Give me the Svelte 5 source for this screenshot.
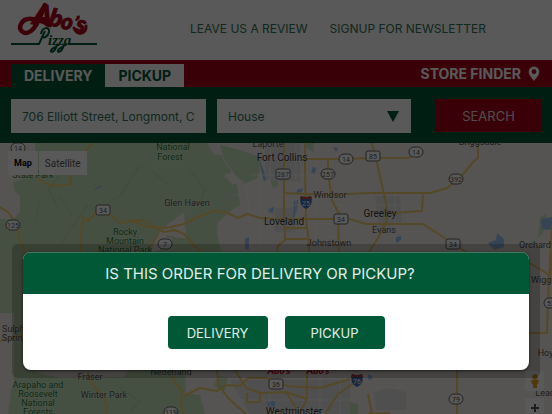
<script>
  let address = $state('706 Elliott Street, Longmont, CO 80504, USA');
  let place = $state('House');

  const roads = [
    'M0 207 L8 212 17 225 20 240 29 258',
    'M93 143 L84 152 M38 178 L46 184 58 186 71 184 71 174',
    'M80 252 L81 235 83 217 88 221 99 210 112 216 120 223 132 221 147 227 166 228 184 224 198 217 213 211 225 212 238 218 247 214 260 218 284 219 350 219 366 224 400 224 423 224 437 233 452 243 466 252',
    'M130 221 L143 220 156 228 164 232 176 230 M158 234 L152 245 146 252 M172 229 L184 234 200 252',
    'M284 143 L284 218 285 240 278 246 277 252 M285 228 L307 228 M285 239 L308 239',
    'M305 143 L305 170 306 219 309 242 309 252',
    'M305 159 L345 159 368 158 408 158 423 150',
    'M284 193 L330 195 368 193 430 193 447 188 460 178 474 161 478 158 478 143',
    'M328 159 L328 172 332 200 340 216 M338 219 L339 252',
    'M372 143 L379 172 386 203 387 220 378 238 369 252 M392 213 L422 211 423 195',
    'M528 262 L548 274 550 280 552 252 M552 225 L548 300 547 333 528 333',
    'M0 341 L24 335 M88 372 L91 382 100 393 107 406 106 414 M172 370 L173 380 182 391 181 404 184 414',
    'M184 396 L200 388 217 391 226 385 240 386 248 378 266 378 288 386 320 388 350 379',
    'M217 370 L219 386 229 399 246 414 M235 370 L246 388 260 393 286 392 307 399 307 370 M307 399 L299 414 M286 392 L300 414 M325 414 L338 394 361 378',
    'M247 393 L247 402 260 402 260 393 M457 370 L457 414 M368 394 L372 414 M368 414 L390 413'
  ];

  const minor = [
    'M217 143 L224 160 236 177 246 183 250 219',
    'M232 195 L284 195 M260 180 L260 252 M270 143 L270 252 M296 143 L296 252 M316 143 L316 252 M250 175 L330 175 M250 205 L345 205 M320 237 L368 237',
    'M350 143 L350 252 M368 180 L430 180 M368 205 L420 205 M395 170 L395 245 M408 180 L408 240 M370 232 L430 232',
    'M190 378 L350 378 M200 400 L350 400 M270 370 L270 414 M320 370 L320 414 M340 370 L340 414 M410 370 L410 414 M480 370 L480 414 M370 388 L528 388'
  ];

  const labels = [
    { x: 173, y: 150, t: 'National', c: 'park' },
    { x: 170, y: 160, t: 'Forest', c: 'park' },
    { x: 33, y: 178, t: 'State Park', c: 'park' },
    { x: 125, y: 235, t: 'Rocky', c: 'park' },
    { x: 125, y: 244, t: 'Mountain', c: 'park' },
    { x: 125, y: 253, t: 'National Park', c: 'park' },
    { x: 38, y: 388, t: 'Arapaho and', c: 'park' },
    { x: 38, y: 397, t: 'Roosevelt', c: 'park' },
    { x: 38, y: 406, t: 'National', c: 'park' },
    { x: 38, y: 415, t: 'Forests', c: 'park' },
    { x: 187, y: 206, t: 'Glen Haven', c: 'town' },
    { x: 268, y: 147, t: 'Laporte', c: 'town' },
    { x: 282, y: 161, t: 'Fort Collins', c: 'city' },
    { x: 330, y: 198, t: 'Windsor', c: 'town' },
    { x: 284, y: 225, t: 'Loveland', c: 'city' },
    { x: 329, y: 246, t: 'Johnstown', c: 'town' },
    { x: 380, y: 217, t: 'Greeley', c: 'city' },
    { x: 384, y: 233, t: 'Evans', c: 'town' },
    { x: 480, y: 145, t: 'Briggsdale', c: 'town' },
    { x: 535, y: 248, t: 'Orchard', c: 'town' },
    { x: 547, y: 283, t: 'Wiggins', c: 'town' },
    { x: 547, y: 356, t: 'Hoyt', c: 'town' },
    { x: 549, y: 396, t: 'Leader', c: 'town' },
    { x: 9, y: 332, t: 'Hot Sulphur', c: 'town' },
    { x: 17, y: 341, t: 'Springs', c: 'town' },
    { x: 90, y: 380, t: 'Fraser', c: 'town' },
    { x: 104, y: 398, t: 'Winter Park', c: 'town' },
    { x: 171, y: 375, t: 'Nederland', c: 'town' },
    { x: 294, y: 415, t: 'Westminster', c: 'city' }
  ];

  const shields = [
    { x: 18, y: 148, n: '14' },
    { x: 13, y: 225, n: '125' },
    { x: 103, y: 210, n: '34', us: true },
    { x: 165, y: 244, n: '7' },
    { x: 283, y: 174, n: '287', us: true },
    { x: 328, y: 174, n: '257' },
    { x: 346, y: 159, n: '14' },
    { x: 373, y: 156, n: '85', us: true },
    { x: 416, y: 152, n: '14' },
    { x: 456, y: 179, n: '392' },
    { x: 341, y: 219, n: '34', us: true },
    { x: 453, y: 244, n: '34', us: true },
    { x: 276, y: 384, n: '36', us: true },
    { x: 171, y: 412, n: '119' },
    { x: 456, y: 399, n: '79' },
    { x: 551, y: 303, n: '52' }
  ];

  const interstates = [
    { x: 306, y: 202, n: '25' },
    { x: 357, y: 380, n: '76' }
  ];
</script>

<div class="page">
  <header>
    <a class="logo" href="#home" aria-label="Abo's Pizza">
      <svg width="88" height="56" viewBox="10 0 88 56">
        <path d="M45 5 C41 14 38 26 31 31 C24 36 18 30 21 24 C25 16 36 18 50 25" fill="none" stroke="#a80018" stroke-width="4.5" stroke-linecap="round" />
        <g class="word">
          <text x="32" y="24" font-size="29" transform="rotate(8 32 24)">A</text>
          <text x="48" y="25" font-size="24" transform="rotate(12 48 25)">b</text>
          <text x="60" y="28" font-size="22" transform="rotate(12 60 28)">o</text>
          <text x="73" y="28" font-size="17" transform="rotate(12 73 28)">’</text>
          <text x="75" y="31" font-size="23" transform="rotate(12 75 31)">s</text>
        </g>
        <path d="M74 28 C77 36 87 34 86 26" fill="none" stroke="#a80018" stroke-width="3" stroke-linecap="round" />
        <path d="M11 44 H39 L45 31 M68 44 H97" fill="none" stroke="#005836" stroke-width="2" />
        <path d="M41 34 C42 27 50 26 49 32 C48 37 43 39 42 36" fill="none" stroke="#005836" stroke-width="2" />
        <text class="pizza" x="48" y="45">izza</text>
        <path d="M57 44 C55 54 48 53 52 49 L60 44 M64 44 C62 54 55 53 59 49 L67 44" fill="none" stroke="#005836" stroke-width="2" />
      </svg>
    </a>
    <nav>
      <a href="#review">LEAVE US A REVIEW</a>
      <a href="#newsletter">SIGNUP FOR NEWSLETTER</a>
    </nav>
  </header>

  <div class="bar">
    <div class="tabs">
      <button class="tab active">DELIVERY</button>
      <button class="tab">PICKUP</button>
    </div>
    <a class="finder" href="#stores">
      STORE FINDER
      <svg width="12" height="16" viewBox="0 0 12 16">
        <path fill="#fff" fill-rule="evenodd" d="M6 0.5 A5.3 5.3 0 0 0 .7 5.8 C.7 9.5 4 12 6 15 C8 12 11.3 9.5 11.3 5.8 A5.3 5.3 0 0 0 6 .5 Z M6 3.3 A2.4 2.4 0 1 1 6 8.1 A2.4 2.4 0 1 1 6 3.3 Z" />
      </svg>
    </a>
  </div>

  <form class="search" onsubmit={(e) => e.preventDefault()}>
    <input type="text" aria-label="Address" bind:value={address} />
    <div class="select">
      <select aria-label="Place type" bind:value={place}>
        <option>House</option>
        <option>Apartment</option>
        <option>Business</option>
      </select>
      <svg width="12" height="11" viewBox="0 0 12 11"><path d="M0 0 H12 L6 11 Z" fill="#005836" /></svg>
    </div>
    <button>SEARCH</button>
  </form>

  <div class="map">
    <svg class="tiles" viewBox="0 143 552 271" preserveAspectRatio="xMidYMin slice">
      <rect x="0" y="143" width="552" height="271" fill="#f3efea" />
      <path fill="#c8e6bd" d="M35 143 H207 L214 155 232 154 231 172 224 177 237 184 240 205 232 210 218 222 217 233 221 252 225 414 H8 L12 385 14 313 0 313 V219 L13 219 20 212 20 196 14 190 13 182 20 180 35 172 Z" />
      <path fill="#f3efea" d="M168 224 L184 212 186 238 178 238 165 240 160 250 152 252 153 240 Z M224 174 L237 174 240 184 232 184 Z M0 313 H14 V388 L0 392 Z M20 368 H130 L124 377 60 378 Z M185 370 H225 V414 H205 L200 395 186 393 Z" />
      <path fill="#c8e6bd" d="M220 145 L240 150 262 158 258 178 244 184 226 166 Z M270 180 L277 176 278 186 273 188 Z M306 143 H314 V152 L306 148 Z M247 390 H262 V402 H247 Z M330 405 L342 400 358 404 358 414 H326 Z M218 375 L228 378 224 392 214 386 Z M540 218 L546 214 545 230 538 238 Z" />
      <path fill="#e4e2e6" d="M265 143 H300 V182 L265 180 Z M275 208 H296 V232 H275 Z M375 196 L400 196 402 222 380 228 Z M374 392 L390 387 407 393 406 410 376 410 Z M230 380 L350 380 V414 H250 Z" />
      <g fill="none" stroke="#b8d6a9" stroke-width="2" opacity=".6">
        <path d="M140 165 L120 196 108 204 M62 172 L48 190 60 210 M88 205 L70 230 60 246 M190 170 L205 190 200 204 M184 240 L166 236 M120 388 L140 402 130 412 M60 196 L72 216 M150 170 L168 184 M30 250 L20 270 M40 200 L34 226" />
      </g>
      <g fill="#9bc7f2">
        <path d="M94 189 L102 185 102 187 95 190 Z M260 160 L264 171 266 180 264 182 261 170 Z M294 201 L298 200 297 212 293 218 Z M245 239 L249 237 249 249 245 250 Z M313 167 L317 168 315 174 311 172 Z M297 190 L303 188 302 192 296 193 Z M333 147 L338 148 336 152 Z M396 237 L401 236 401 240 396 243 Z M488 243 L496 240 497 233 504 239 504 247 494 250 Z M541 219 L552 217 552 230 542 229 Z M267 402 L275 401 275 406 268 407 Z M368 374 L373 376 371 380 368 379 Z M268 209 L274 207 273 213 269 213 Z" />
      </g>
      {#each minor as d}<path {d} fill="none" stroke="#fff" stroke-width="1" opacity=".6" />{/each}
      {#each roads as d}<path {d} fill="none" stroke="#f3cf70" stroke-width="2" stroke-linejoin="round" />{/each}
      {#each labels as l}<text x={l.x} y={l.y} class={l.c}>{l.t}</text>{/each}
      {#each shields as s}
        <rect x={s.x - 7} y={s.y - 5} width="14" height="10" rx={s.us ? 2 : 5} fill="#fff" stroke="#666" />
        <text class="num" x={s.x} y={s.y + 3}>{s.n}</text>
      {/each}
      {#each interstates as s}
        <path transform="translate({s.x} {s.y})" d="M-5 -6 Q0 -4 5 -6 Q8 3 0 7 Q-8 3 -5 -6 Z" fill="#3f6eb4" />
        <path transform="translate({s.x} {s.y})" d="M-5 -6 Q0 -4 5 -6 L6 -3 H-6 Z" fill="#c5423f" />
        <text class="num inter" x={s.x} y={s.y + 4}>{s.n}</text>
      {/each}
      <text class="marker" x="279" y="374">Abo’s</text>
      <text class="marker" x="318" y="374">Abo’s</text>
    </svg>
    <div class="types">
      <button class="on">Map</button>
      <button>Satellite</button>
    </div>
    <div class="controls">
      <button aria-label="Street View">
        <svg width="10" height="14" viewBox="0 0 10 14"><circle cx="5" cy="3" r="2.7" fill="#e8a317" /><path d="M1 6 H9 L8 10 H7 V14 H3 V10 H2 Z" fill="#e8a317" /></svg>
      </button>
      <button aria-label="Zoom in">
        <svg width="8" height="8" viewBox="0 0 8 8"><path d="M4 0 V8 M0 4 H8" stroke="#555" stroke-width="2" /></svg>
      </button>
    </div>
  </div>

  <div class="overlay">
    <div class="frame">
      <div class="dialog" role="dialog" aria-labelledby="question">
        <h2 id="question">IS THIS ORDER FOR DELIVERY OR PICKUP?</h2>
        <div class="choices">
          <button>DELIVERY</button>
          <button>PICKUP</button>
        </div>
      </div>
    </div>
  </div>
</div>

<style>
  :global(body) {
    margin: 0;
  }
  .page {
    position: relative;
    display: flex;
    flex-direction: column;
    height: 100vh;
    overflow: hidden;
    font-family: Inter, 'Open Sans', sans-serif;
    color: #005836;
  }
  * {
    box-sizing: border-box;
  }
  a {
    color: inherit;
    text-decoration: none;
  }
  button,
  input,
  select {
    font: inherit;
    color: inherit;
    border: 0;
    border-radius: 0;
    margin: 0;
    padding: 0;
  }
  svg {
    display: block;
  }
  header {
    display: flex;
    height: 60px;
    padding: 0 66px 0 10px;
    justify-content: space-between;
    background: #fff;
  }
  .word text {
    font-family: Lato, sans-serif;
    font-weight: 900;
    font-style: italic;
    fill: #a80018;
    stroke: #a80018;
    stroke-width: 1;
    stroke-linejoin: round;
  }
  .pizza {
    font: italic 700 15px 'Liberation Serif', serif;
    fill: #005836;
  }
  nav {
    display: flex;
    align-items: center;
    gap: 22px;
    padding-bottom: 4px;
    color: #2f7258;
    font-size: 12px;
  }
  .bar {
    display: flex;
    justify-content: space-between;
    align-items: flex-end;
    height: 27px;
    padding: 0 12px 0 11px;
    background: #a60018;
  }
  .tabs {
    display: flex;
  }
  .tab {
    height: 23px;
    padding: 0 13px;
    background: #fff;
    font-size: 14px;
    font-weight: 700;
    line-height: 22px;
  }
  .tab.active {
    background: #005836;
    color: #fff;
  }
  .finder {
    display: flex;
    align-items: center;
    gap: 7px;
    height: 27px;
    color: #fff;
    font-size: 14px;
    font-weight: 700;
  }
  .search {
    display: grid;
    grid-template-columns: 195fr 230fr 105fr;
    height: 56px;
    padding: 12px 11px 10px;
    background: #005836;
  }
  .search input {
    min-width: 0;
    height: 34px;
    border: 0 solid #fff;
    border-width: 0 11px;
    background: #fff;
    color: #2f7258;
    font-size: 12px;
  }
  .select {
    display: flex;
    align-items: center;
    height: 34px;
    margin: 0 25px 0 11px;
    padding-right: 12px;
    background: #fff;
  }
  .select select {
    flex: 1;
    min-width: 0;
    height: 34px;
    padding: 0 11px;
    appearance: none;
    background: transparent;
    color: #2f7258;
    font-size: 12px;
  }
  .search button {
    height: 33px;
    background: #a60018;
    color: #ddd;
    font-size: 13px;
  }
  .map {
    position: relative;
    flex: 1;
    min-height: 0;
  }
  .tiles {
    width: 100%;
    height: 100%;
  }
  .tiles text {
    font-family: Roboto, sans-serif;
    text-anchor: middle;
    paint-order: stroke;
    stroke: #fff;
    stroke-opacity: 0.4;
    stroke-width: 1;
    fill: #555;
    font-size: 9px;
  }
  .tiles .park {
    fill: #1c7a35;
  }
  .tiles .city {
    font-size: 10px;
    fill: #333;
  }
  .tiles .num {
    font-size: 7px;
    stroke: none;
  }
  .tiles .inter {
    fill: #fff;
  }
  .tiles .marker {
    font: italic 900 10px Lato, sans-serif;
    fill: #e3001b;
  }
  .types {
    position: absolute;
    top: 8px;
    left: 8px;
    display: flex;
    gap: 1px;
    font: 10px Roboto, sans-serif;
  }
  .types button {
    height: 24px;
    padding: 0 6px;
    background: #fff;
    color: #565656;
  }
  .types .on {
    color: #000;
    font-size: 9px;
    font-weight: 700;
  }
  .controls {
    position: absolute;
    right: 8px;
    bottom: -4px;
    display: grid;
    gap: 7px;
  }
  .controls button {
    display: grid;
    place-items: center;
    width: 19px;
    height: 20px;
    background: #fff;
  }
  .overlay {
    position: absolute;
    inset: 0;
    display: flex;
    flex-direction: column;
    justify-content: flex-end;
    padding: 0 12px 36px;
    background: rgba(0, 0, 0, 0.65);
  }
  .frame {
    padding: 8px 11px;
    border-radius: 6px;
    background: rgba(0, 0, 0, 0.2);
  }
  .dialog {
    overflow: hidden;
    border-radius: 8px;
    background: #fff;
    box-shadow: 0 1px 3px rgba(0, 0, 0, 0.6);
  }
  h2 {
    margin: 0;
    padding-right: 32px;
    border-top: 1px solid #3d7a60;
    background: #005836;
    color: #e2eee9;
    font-size: 15px;
    font-weight: 400;
    line-height: 41px;
    text-align: center;
  }
  .choices {
    display: flex;
    justify-content: center;
    gap: 17px;
    padding: 22px 0 21px;
  }
  .choices button {
    width: 100px;
    height: 33px;
    border-radius: 4px;
    background: #005836;
    color: #e2eee9;
    font-size: 13px;
  }
</style>
